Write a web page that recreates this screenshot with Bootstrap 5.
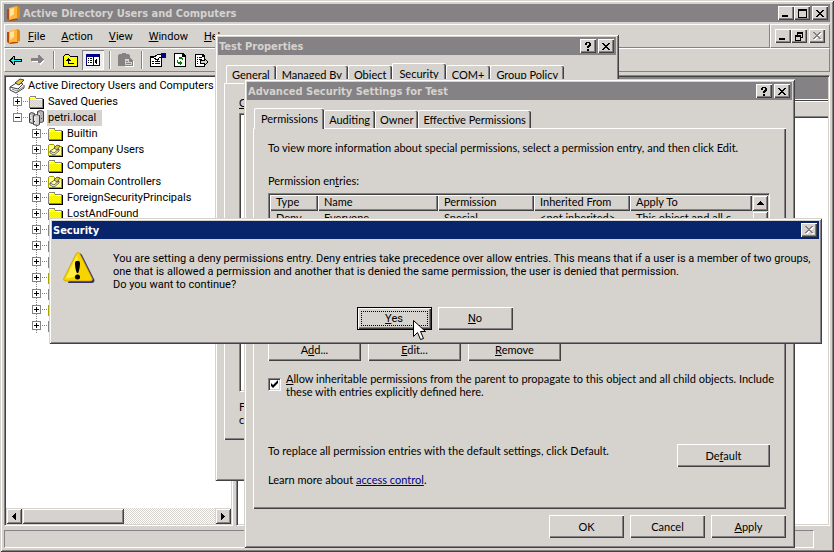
<!DOCTYPE html>
<html lang="en">
<head>
<meta charset="utf-8">
<meta name="viewport" content="width=device-width, initial-scale=1">
<title>Active Directory Users and Computers</title>
<link rel="stylesheet" href="https://cdn.jsdelivr.net/npm/bootstrap@5.3.0/dist/css/bootstrap.min.css">
<style>
:root{--face:#d6d3ce;--shade:#848284;--dark:#424142;--navy:#08246b}
body{font-family:Roboto,"Liberation Sans",sans-serif;font-size:11px;line-height:13px;color:#000;background:var(--face);overflow:hidden}
svg{display:block;flex:none}
button{color:#000}
.crisp{shape-rendering:crispEdges}

/* window frames */
.window{background:var(--face);padding:3px;box-shadow:inset 1px 1px var(--face),inset -1px -1px var(--dark),inset 2px 2px #fff,inset -2px -2px var(--shade)}
.main-window{padding:4px}
.caption-bar{height:18px;background:var(--shade);color:var(--face);font-family:"DejaVu Sans Condensed","DejaVu Sans",sans-serif;font-weight:700;padding:0 2px 0 1px}
.caption-bar.active-caption{background:var(--navy);color:#fff}
.caption-btn{width:16px;height:14px;padding:0;border:0;background:var(--face);display:flex;align-items:center;justify-content:center;box-shadow:inset 1px 1px #fff,inset -1px -1px var(--dark),inset -2px -2px var(--shade)}
.caption-close{margin-left:2px}
.app-icon{margin:0 3px 0 2px}
.props-window{position:absolute;left:215px;top:34px;width:404px;padding-bottom:41px;z-index:2}
.acl-window{position:absolute;left:244px;top:79px;width:551px;z-index:3}
.alert-window{position:absolute;left:49px;top:218px;width:773px;z-index:4}
.pointer{position:absolute;left:413px;top:319px;z-index:5}

/* buttons */
.push{height:23px;width:75px;padding:0 0 1px;border:0;border-radius:0;background:var(--face);font-size:11px;line-height:13px;box-shadow:inset 1px 1px #fff,inset -1px -1px var(--dark),inset -2px -2px var(--shade)}
.push-wide{width:93px}
.push-default{box-shadow:inset 0 0 0 1px #000,inset 2px 2px #fff,inset -2px -2px var(--dark),inset -3px -3px var(--shade);padding:4px}
.push-default span{display:block;border:1px dotted #000;height:15px;line-height:13px}
.push u,.menu-link u{text-underline-offset:1px}

/* menu and tool bars */
.rebar{padding-top:2px}
.bar{height:24px;border:1px solid;border-color:#fff var(--shade) var(--shade) #fff}
.menu-link{color:#000;text-decoration:none;padding:0 8px}
.tool{width:22px;height:20px;padding:0;border:0;background:none;display:flex;align-items:center;justify-content:center}
.tool-on{margin:0 1px;background:#efedea;box-shadow:inset 1px 1px var(--shade),inset -1px -1px #fff}
.rule{width:2px;height:18px;background:linear-gradient(90deg,var(--shade) 50%,#fff 50%)}
.rule-gap{margin:0 4px}

/* panes */
.panes{gap:3px;padding-top:3px}
.sunken{border:1px solid;border-color:var(--shade) #fff #fff var(--shade);box-shadow:inset 1px 1px var(--dark),inset -1px -1px var(--face);padding:1px}
.tree-pane{flex:0 0 229px;background:#fff}
.tree-list{padding:1px 0 0 3px}
.tree-row{height:16px;white-space:nowrap}
.tree-row span{margin-left:2px;padding:1px 2px 1px 1px;height:16px}
.tree-row.picked span{background:var(--face);padding-right:6px}
.level-2{padding-left:19px}
.scroll-btn{width:16px;height:16px;padding:0;border:0;background:var(--face);display:flex;align-items:center;justify-content:center;box-shadow:inset 1px 1px var(--face),inset -1px -1px var(--dark),inset 2px 2px #fff,inset -2px -2px var(--shade)}
.scroll-track{background:repeating-conic-gradient(#fff 0 25%,var(--face) 0 50%) 0 0/2px 2px}
.scroll-thumb{width:102px;height:16px;background:var(--face);box-shadow:inset 1px 1px var(--face),inset -1px -1px var(--dark),inset 2px 2px #fff,inset -2px -2px var(--shade)}
.pane-caption{height:23px;background:var(--shade);border-bottom:1px solid #fff}
.pane-head{height:18px;background:var(--face);border-top:1px solid var(--dark);box-shadow:inset 0 1px #fff,inset 0 -1px var(--dark),inset 0 -2px var(--shade)}
.status-cell{height:18px;border:1px solid;border-color:var(--shade) #fff #fff var(--shade)}

/* property sheets */
.dialog-body{padding:8px 6px 0;font-family:Lato,"Liberation Sans",sans-serif}
.dialog-body button{font-family:inherit}
.sheet{background:var(--face);box-shadow:inset 1px 1px #fff,inset -1px -1px var(--dark),inset -2px -2px var(--shade)}
.props-sheet{padding:13px 15px 14px}
.acl-sheet{padding:13px 16px 23px 15px}
.tabs{padding-left:2px}
.sheet-tab{height:18px;padding:0 6px 0 5px;border:1px solid #fff;border-width:1px 0 0 1px;border-radius:2px 2px 0 0;background:var(--face);box-shadow:inset -1px 0 var(--dark),inset -2px 0 var(--shade);font-size:11px;line-height:13px;color:#000;white-space:nowrap}
.sheet-tab.active{height:21px;margin-bottom:-1px;padding:0 7px 2px 6px;position:relative}
.acl-window .tabs{padding-left:1px}
.acl-window .sheet-tab{padding-left:4px;padding-right:5px}
.acl-window .sheet-tab.active{padding-left:6px;padding-right:6px}
.user-list{height:279px;background:#fff}
.entries-label{margin:20px 0 6px}
.entries{height:138px;background:#fff}
.entries table{table-layout:fixed;width:100%;border-collapse:separate;border-spacing:0}
.entries th{font-weight:400;height:16px;padding:0 6px 2px;background:var(--face);box-shadow:inset 1px 1px #fff,inset -1px -1px var(--dark),inset -2px -2px var(--shade);line-height:14px}
.entries td{padding:0 6px 1px;background:var(--face);white-space:nowrap;overflow:hidden}
.c-type{width:48px}.c-name{width:120px}.c-mid{width:96px}
.acl-actions{margin-top:7px;gap:7px}
.inherit-row{margin-top:11px}
.tick{appearance:none;width:13px;height:13px;margin:6px 5px 0 0;border:1px solid;border-color:var(--shade) #fff #fff var(--shade);background:#fff url("data:image/svg+xml,%3Csvg xmlns='http://www.w3.org/2000/svg' viewBox='0 0 11 11'%3E%3Cpath d='M2 4v3l2 2 5-5V1L4 6z'/%3E%3C/svg%3E") center/11px;box-shadow:inset 1px 1px var(--dark),inset -1px -1px var(--face);flex:none}
.default-row{margin-top:46px}
.learn-row{margin-top:6px}
.help-link{color:#000084}
.dialog-buttons{gap:6px;padding:6px 0 7px}

/* message box */
.alert-content{padding:13px 11px 0;gap:18px}
.alert-buttons{gap:6px;padding:16px 2px 11px 0}
</style>
<script src="https://cdn.jsdelivr.net/npm/bootstrap@5.3.0/dist/js/bootstrap.bundle.min.js"></script>
</head>
<body>
<svg width="0" height="0" class="position-absolute" aria-hidden="true">
<defs>
<symbol id="g-close" viewBox="0 0 8 7"><path d="M0 0h2v1h1v1h2V1h1V0h2v1H7v1H6v1H5v1h1v1h1v1h1v1H6V6H5V5H3v1H2v1H0V6h1V5h1V4h1V3H2V2H1V1H0z"/></symbol>
<symbol id="g-min" viewBox="0 0 8 7"><path d="M0 5h6v2H0z"/></symbol>
<symbol id="g-max" viewBox="0 0 9 9"><path fill-rule="evenodd" d="M0 0h9v9H0zM1 2v6h7V2z"/></symbol>
<symbol id="g-restore" viewBox="0 0 8 9"><path fill-rule="evenodd" d="M2 0h6v6H6V5h1V2H3v1H2zM0 3h6v6H0zM1 5v3h4V5z"/></symbol>
<symbol id="g-help" viewBox="0 0 6 9"><path d="M1 0h4v1h1v3H5v1H4v1H2V4h1V3h1V1H2v2H0V1h1zM2 7h2v2H2z"/></symbol>
<symbol id="plus" viewBox="0 0 20 16"><path d="M8.500 0v16M14 7.500h6" stroke="#848284" stroke-dasharray="1 1"/><path fill="#fff" stroke="#848284" d="M4.500 3.500h8v8h-8z"/><path d="M6 7h5v1H6zM8 5h1v5H8z"/></symbol>
<symbol id="minus" viewBox="0 0 20 16"><path d="M8.500 0v3M14 7.500h6" stroke="#848284" stroke-dasharray="1 1"/><path fill="#fff" stroke="#848284" d="M4.500 3.500h8v8h-8z"/><path d="M6 7h5v1H6z"/></symbol>
<symbol id="folder" viewBox="0 0 16 16"><path fill="#848284" d="M1 2h6v2h7v10H0V3h1z"/><path fill="#ff0" d="M1 3h5v1h1v1h6v8H1z"/><path stroke="#d6d3ce" stroke-dasharray="1 1" d="M1 6.500h12M2 7.500h11M1 8.500h12M2 9.500h11M1 10.500h12M2 11.500h11M1 12.500h12"/><path fill="#fff" d="M1 3h5v1H1zM1 5h12v1H1z"/><path d="M14 5h1v10H1v-1h13z"/></symbol>
<symbol id="unit" viewBox="0 0 16 16"><path fill="#a5a200" d="M0 3h1V2h5v1h1v1h7v10H0z"/><path fill="#ffff8c" d="M1 3h5v2h7v8H1z"/><path d="M14 5h1v10H1v-1h13z"/><path fill="#fff" stroke="#424142" stroke-width=".8" d="M2 9l5-3 4 1-5 4zM2 9v2l4 2 5-4V7"/><path fill="#e7c63a" stroke="#424142" stroke-width=".8" d="M6 6l3-3 3 1-3 4z"/></symbol>
<symbol id="book" viewBox="0 0 13 15"><path fill="#b54a08" d="M0 3h2v9l9 1v1l-8 1-3-2z"/><path fill="#ffb63a" d="M2 2l8-2v12l-8 2z"/><path fill="#ffe3a0" d="M3 3l4-1v6l-4 3z"/><path fill="#e78a10" d="M10 0h1l2 2v10l-3 1z"/></symbol>
</defs>
</svg>

<main class="window main-window d-flex flex-column vh-100">
  <header class="caption-bar d-flex align-items-center">
    <svg class="app-icon" width="13" height="15"><use href="#book"/></svg>
    <span class="flex-grow-1">Active Directory Users and Computers</span>
    <button class="caption-btn" aria-label="Minimize"><svg class="crisp" width="8" height="7"><use href="#g-min"/></svg></button>
    <button class="caption-btn" aria-label="Maximize"><svg class="crisp" width="9" height="9"><use href="#g-max"/></svg></button>
    <button class="caption-btn caption-close" aria-label="Close"><svg class="crisp" width="8" height="7"><use href="#g-close"/></svg></button>
  </header>

  <div class="rebar">
    <div class="d-flex">
      <nav class="bar flex-grow-1 d-flex align-items-center">
        <svg class="app-icon me-0" width="13" height="15"><use href="#book"/></svg>
        <span class="d-flex"><a class="menu-link" href="#"><u>F</u>ile</a><a class="menu-link" href="#"><u>A</u>ction</a><a class="menu-link" href="#"><u>V</u>iew</a><a class="menu-link" href="#"><u>W</u>indow</a><a class="menu-link pe-0" href="#"><u>H</u>elp</a></span>
      </nav>
      <div class="bar d-flex align-items-center ps-1 pe-1">
        <button class="caption-btn" aria-label="Minimize console"><svg class="crisp" width="8" height="7"><use href="#g-min"/></svg></button>
        <button class="caption-btn" aria-label="Restore console"><svg class="crisp" width="8" height="9"><use href="#g-restore"/></svg></button>
        <button class="caption-btn caption-close" aria-label="Close console"><svg class="crisp" width="9" height="8"><use href="#g-close" fill="#fff" x="1" y="1" width="8" height="7"/><use href="#g-close" fill="#848284" width="8" height="7"/></svg></button>
      </div>
    </div>
    <div class="bar d-flex align-items-center">
      <button class="tool" aria-label="Back"><svg class="crisp" width="14" height="9" viewBox="0 0 14 9"><path d="M0 4h1V3h1V2h1V1h1V0h2v3h7v3H6v3H4V8H3V7H2V6H1V5H0z"/><path fill="#0ff" d="M2 4h1V3h1V1h1v3h7v1H5v3H4V6H3V5H2z"/></svg></button>
      <button class="tool" aria-label="Forward"><svg class="crisp" width="14" height="10" viewBox="0 0 14 10"><path fill="#fff" d="M1 4h7V1l6 5-5 4V7H1z"/><path fill="#848284" d="M0 3h7V0h2v1h1v1h1v1h1v1h1v1h-1v1h-1v1h-1v1H7V6H0z"/></svg></button>
      <div class="rule rule-gap"></div>
      <button class="tool" aria-label="Up one level"><svg class="crisp" width="15" height="13" viewBox="0 0 15 13"><path d="M1 1h1V0h4v1h1v1h8v11H0V2h1z"/><path fill="#ff0" d="M1 2h1V1h4v1h1v1h7v9H1z"/><path d="M5 4h1v1h1v1h1v1H6v2h5v1H5V7H3V6h1V5h1z"/></svg></button>
      <button class="tool tool-on" aria-label="Show console tree"><svg class="crisp" width="14" height="12" viewBox="0 0 14 12"><path fill="#000084" d="M0 0h14v12H0z"/><path fill="#fff" d="M1 3h6v8H1zM8 3h5v8H8z"/><path d="M2 4h1v1H2zM4 4h2v1H4zM2 6h1v1H2zM4 6h2v1H4zM2 8h1v1H2zM4 8h2v1H4zM11 4v6H10V9H9V6h1V5z"/></svg></button>
      <div class="rule rule-gap"></div>
      <button class="tool" aria-label="Paste"><svg class="crisp" width="16" height="14" viewBox="0 0 16 14"><path fill="#848284" d="M0 2h1V1h3V0h4v1h3v1h1v3h-3v8H0z"/><path fill="#fff" d="M7 6h6l3 3v5H7z"/><path fill="#848284" d="M6 5h6l3 3v5H6z"/><path fill="#d6d3ce" d="M7 6h4v3h3v3H7z"/><path fill="#848284" d="M8 8h2v1H8zM8 10h5v1H8z"/></svg></button>
      <div class="rule rule-gap"></div>
      <button class="tool" aria-label="Properties"><svg class="crisp" width="16" height="14" viewBox="0 0 16 14"><path d="M0 3h12v11H0z"/><path fill="#fff" d="M1 5h10v8H1z"/><path d="M2 8h2v1H2zM5 8h5v1H5zM2 10h2v1H2zM5 10h5v1H5z"/><path fill="#fff" stroke="#000" d="M3.500 4.500l4-3h4v2l-3 2-1 2z"/><path fill="#000084" d="M11 0h5v5h-5z"/></svg></button>
      <button class="tool" aria-label="Refresh"><svg class="crisp" width="12" height="14" viewBox="0 0 12 14"><path d="M0 0h9l3 3v11H0z"/><path fill="#fff" d="M1 1h7v3h3v9H1z"/><path fill="#008200" d="M4 5l2-2v1h2v1h1v2H8V6H6v1zM3 7h1v2h2V8l2 2-2 2v-1H4v-1H3z"/></svg></button>
      <button class="tool" aria-label="Export list"><svg class="crisp" width="14" height="13" viewBox="0 0 14 13"><path d="M0 0h8l2 2v11H0z"/><path fill="#fff" d="M1 1h6v2h2v9H1z"/><path d="M2 3h1v1H2zM4 3h3v1H4zM2 5h1v1H2zM4 5h3v1H4zM2 7h1v1H2zM2 9h1v1H2zM5 6h4V4l5 4-5 4V10H5z"/><path fill="#d6d3ce" d="M6 7h4V6l2 2-2 2V9H6z"/></svg></button>
    </div>
  </div>

  <div class="panes d-flex flex-grow-1">
    <section class="sunken tree-pane d-flex flex-column justify-content-between">
      <ul class="tree-list list-unstyled mb-0">
        <li class="tree-row d-flex"><svg width="16" height="16" viewBox="0 0 16 16"><path fill="#fff" stroke="#424142" d="M1 9l8-5 5 2-5 5zM1 9v3l6 3 8-5V7"/><path fill="#e7c63a" stroke="#424142" d="M6 5l5-4 4 1-5 5z"/><path stroke="#848284" d="M3 11l5 2 6-4" fill="none"/></svg><span>Active Directory Users and Computers</span></li>
        <li class="tree-row d-flex"><svg class="crisp" width="20" height="16"><use href="#plus"/></svg><svg class="crisp" width="16" height="16"><use href="#folder"/></svg><span>Saved Queries</span></li>
        <li class="tree-row d-flex picked"><svg class="crisp" width="20" height="16"><use href="#minus"/></svg><svg width="16" height="16" viewBox="0 0 16 16"><g stroke="#424142"><path fill="#b5b2b5" d="M.5 3.500l2-1 3 1v9l-2 1-3-1zM8.500 1.500l3-1 3 1v10l-2 1-4-1z"/><path fill="#d6d3ce" d="M4.500 5.500l3-1 3 1v9l-2 1-4-1z"/></g><path stroke="#fff" d="M2 5v7M6 7v7M10 3v2"/><path fill="#e00" d="M1 9h1v1H1zM5 11h1v1H5zM12 8h1v1h-1z"/></svg><span>petri.local</span></li>
        <li class="tree-row d-flex level-2"><svg class="crisp" width="20" height="16"><use href="#plus"/></svg><svg class="crisp" width="16" height="16"><use href="#folder"/></svg><span>Builtin</span></li>
        <li class="tree-row d-flex level-2"><svg class="crisp" width="20" height="16"><use href="#plus"/></svg><svg width="16" height="16"><use href="#unit"/></svg><span>Company Users</span></li>
        <li class="tree-row d-flex level-2"><svg class="crisp" width="20" height="16"><use href="#plus"/></svg><svg class="crisp" width="16" height="16"><use href="#folder"/></svg><span>Computers</span></li>
        <li class="tree-row d-flex level-2"><svg class="crisp" width="20" height="16"><use href="#plus"/></svg><svg width="16" height="16"><use href="#unit"/></svg><span>Domain Controllers</span></li>
        <li class="tree-row d-flex level-2"><svg class="crisp" width="20" height="16"><use href="#plus"/></svg><svg class="crisp" width="16" height="16"><use href="#folder"/></svg><span>ForeignSecurityPrincipals</span></li>
        <li class="tree-row d-flex level-2"><svg class="crisp" width="20" height="16"><use href="#plus"/></svg><svg class="crisp" width="16" height="16"><use href="#folder"/></svg><span>LostAndFound</span></li>
        <li class="tree-row d-flex level-2"><svg class="crisp" width="20" height="16"><use href="#plus"/></svg><svg class="crisp" width="16" height="16"><use href="#folder"/></svg></li>
        <li class="tree-row d-flex level-2"><svg class="crisp" width="20" height="16"><use href="#plus"/></svg><svg class="crisp" width="16" height="16"><use href="#folder"/></svg></li>
        <li class="tree-row d-flex level-2"><svg class="crisp" width="20" height="16"><use href="#plus"/></svg><svg class="crisp" width="16" height="16"><use href="#folder"/></svg></li>
        <li class="tree-row d-flex level-2"><svg class="crisp" width="20" height="16"><use href="#plus"/></svg><svg width="16" height="16"><use href="#unit"/></svg></li>
        <li class="tree-row d-flex level-2"><svg class="crisp" width="20" height="16"><use href="#plus"/></svg><svg class="crisp" width="16" height="16"><use href="#folder"/></svg></li>
        <li class="tree-row d-flex level-2"><svg class="crisp" width="20" height="16"><use href="#plus"/></svg><svg width="16" height="16"><use href="#unit"/></svg></li>
        <li class="tree-row d-flex level-2"><svg class="crisp" width="20" height="16"><use href="#plus"/></svg><svg class="crisp" width="16" height="16"><use href="#folder"/></svg></li>
      </ul>
      <div class="scroll-track d-flex">
        <button class="scroll-btn" aria-label="Scroll left"><svg class="crisp" width="4" height="7" viewBox="0 0 4 7"><path d="M4 0v7H3V6H2V5H1V4H0V3h1V2h1V1h1V0z"/></svg></button>
        <div class="scroll-thumb"></div>
        <button class="scroll-btn ms-auto" aria-label="Scroll right"><svg class="crisp" width="4" height="7" viewBox="0 0 4 7"><path d="M0 0v7h1V6h1V5h1V4h1V3H3V2H2V1H1V0z"/></svg></button>
      </div>
    </section>
    <section class="sunken bg-white flex-grow-1">
      <div class="pane-caption"></div>
      <div class="pane-head"></div>
    </section>
  </div>
  <footer class="pt-1 pe-3"><div class="status-cell"></div></footer>
</main>

<section class="window props-window" aria-label="Test Properties">
  <header class="caption-bar d-flex align-items-center">
    <span class="flex-grow-1">Test Properties</span>
    <button class="caption-btn" aria-label="Help"><svg class="crisp" width="6" height="9"><use href="#g-help"/></svg></button>
    <button class="caption-btn caption-close" aria-label="Close"><svg class="crisp" width="8" height="7"><use href="#g-close"/></svg></button>
  </header>
  <div class="dialog-body">
    <div class="tabs d-flex align-items-end" role="tablist">
      <button class="sheet-tab" role="tab">General</button><button class="sheet-tab" role="tab">Managed By</button><button class="sheet-tab" role="tab">Object</button><button class="sheet-tab active" role="tab">Security</button><button class="sheet-tab" role="tab">COM+</button><button class="sheet-tab" role="tab">Group Policy</button>
    </div>
    <div class="sheet props-sheet">
      <div><u>G</u>roup</div>
      <div class="sunken user-list mt-1"></div>
      <div class="pt-2">For<br>click</div>
    </div>
  </div>
</section>

<section class="window acl-window" aria-label="Advanced Security Settings for Test">
  <header class="caption-bar d-flex align-items-center">
    <span class="flex-grow-1">Advanced Security Settings for Test</span>
    <button class="caption-btn" aria-label="Help"><svg class="crisp" width="6" height="9"><use href="#g-help"/></svg></button>
    <button class="caption-btn caption-close" aria-label="Close"><svg class="crisp" width="8" height="7"><use href="#g-close"/></svg></button>
  </header>
  <div class="dialog-body">
    <div class="tabs d-flex align-items-end" role="tablist">
      <button class="sheet-tab active" role="tab">Permissions</button><button class="sheet-tab" role="tab">Auditing</button><button class="sheet-tab" role="tab">Owner</button><button class="sheet-tab" role="tab">Effective Permissions</button>
    </div>
    <div class="sheet acl-sheet">
      <div>To view more information about special permissions, select a permission entry, and then click Edit.</div>
      <div class="entries-label">Permission en<u>t</u>ries:</div>
      <div class="sunken entries d-flex">
        <div class="flex-grow-1">
          <table>
            <thead><tr><th class="c-type">Type</th><th class="c-name">Name</th><th class="c-mid">Permission</th><th class="c-mid">Inherited From</th><th>Apply To</th></tr></thead>
            <tbody><tr><td>Deny</td><td>Everyone</td><td>Special</td><td>&lt;not inherited&gt;</td><td>This object and all c...</td></tr></tbody>
          </table>
        </div>
        <div class="scroll-track">
          <button class="scroll-btn" aria-label="Scroll up"><svg class="crisp" width="7" height="4" viewBox="0 0 7 4"><path d="M3 0h1v1h1v1h1v1h1v1H0V3h1V2h1V1h1z"/></svg></button>
          <div class="scroll-btn"></div>
        </div>
      </div>
      <div class="d-flex acl-actions">
        <button class="push push-wide">A<u>d</u>d...</button><button class="push push-wide"><u>E</u>dit...</button><button class="push push-wide"><u>R</u>emove</button>
      </div>
      <div class="d-flex inherit-row">
        <input class="tick" type="checkbox" id="inherit" checked>
        <label class="text-nowrap" for="inherit"><u>A</u>llow inheritable permissions from the parent to propagate to this object and all child objects. Include<br>these with entries explicitly defined here.</label>
      </div>
      <div class="d-flex justify-content-between default-row">
        <span>To replace all permission entries with the default settings, click Default.</span>
        <button class="push push-wide">De<u>f</u>ault</button>
      </div>
      <div class="learn-row">Learn more about <a class="help-link" href="#">access control</a>.</div>
    </div>
    <div class="d-flex justify-content-end dialog-buttons"><button class="push">OK</button><button class="push">Cancel</button><button class="push"><u>A</u>pply</button></div>
  </div>
</section>

<section class="window alert-window" role="alertdialog" aria-labelledby="alert-title">
  <header class="caption-bar active-caption d-flex align-items-center">
    <span class="flex-grow-1" id="alert-title">Security</span>
    <button class="caption-btn" aria-label="Close" disabled><svg class="crisp" width="9" height="8"><use href="#g-close" fill="#fff" x="1" y="1" width="8" height="7"/><use href="#g-close" fill="#848284" width="8" height="7"/></svg></button>
  </header>
  <div class="d-flex alert-content">
    <svg width="32" height="32" viewBox="0 0 32 32"><path fill="#31306b" d="M15 3c1-2 3-2 4 0l12 24c1 2 0 4-2 4H5z"/><path fill="#f7d300" stroke="#c69a00" stroke-width=".7" d="M13 2c1-2 3-2 4 0l12 24c1 2 0 3-2 3H3c-2 0-3-1-2-3z"/><path fill="#ffef42" d="M14 3L3 26c4 1 12-2 14-9z"/><path d="M12 11c0-3 5-3 5 0 0 4-1 9-2 10h-1c-1-1-2-6-2-10z"/><circle cx="14.500" cy="25" r="2.500"/></svg>
    <div class="text-nowrap">You are setting a deny permissions entry. Deny entries take precedence over allow entries. This means that if a user is a member of two groups,<br>one that is allowed a permission and another that is denied the same permission, the user is denied that permission.<br>Do you want to continue?</div>
  </div>
  <div class="d-flex justify-content-center alert-buttons"><button class="push push-default"><span><u>Y</u>es</span></button><button class="push"><u>N</u>o</button></div>
</section>

<svg class="pointer" width="13" height="22" viewBox="0 0 13 22" aria-hidden="true"><path fill="#fff" stroke="#000" d="M.5 1.500v16l4-4 3 7 3-1-3-7h5z"/></svg>
</body>
</html>
